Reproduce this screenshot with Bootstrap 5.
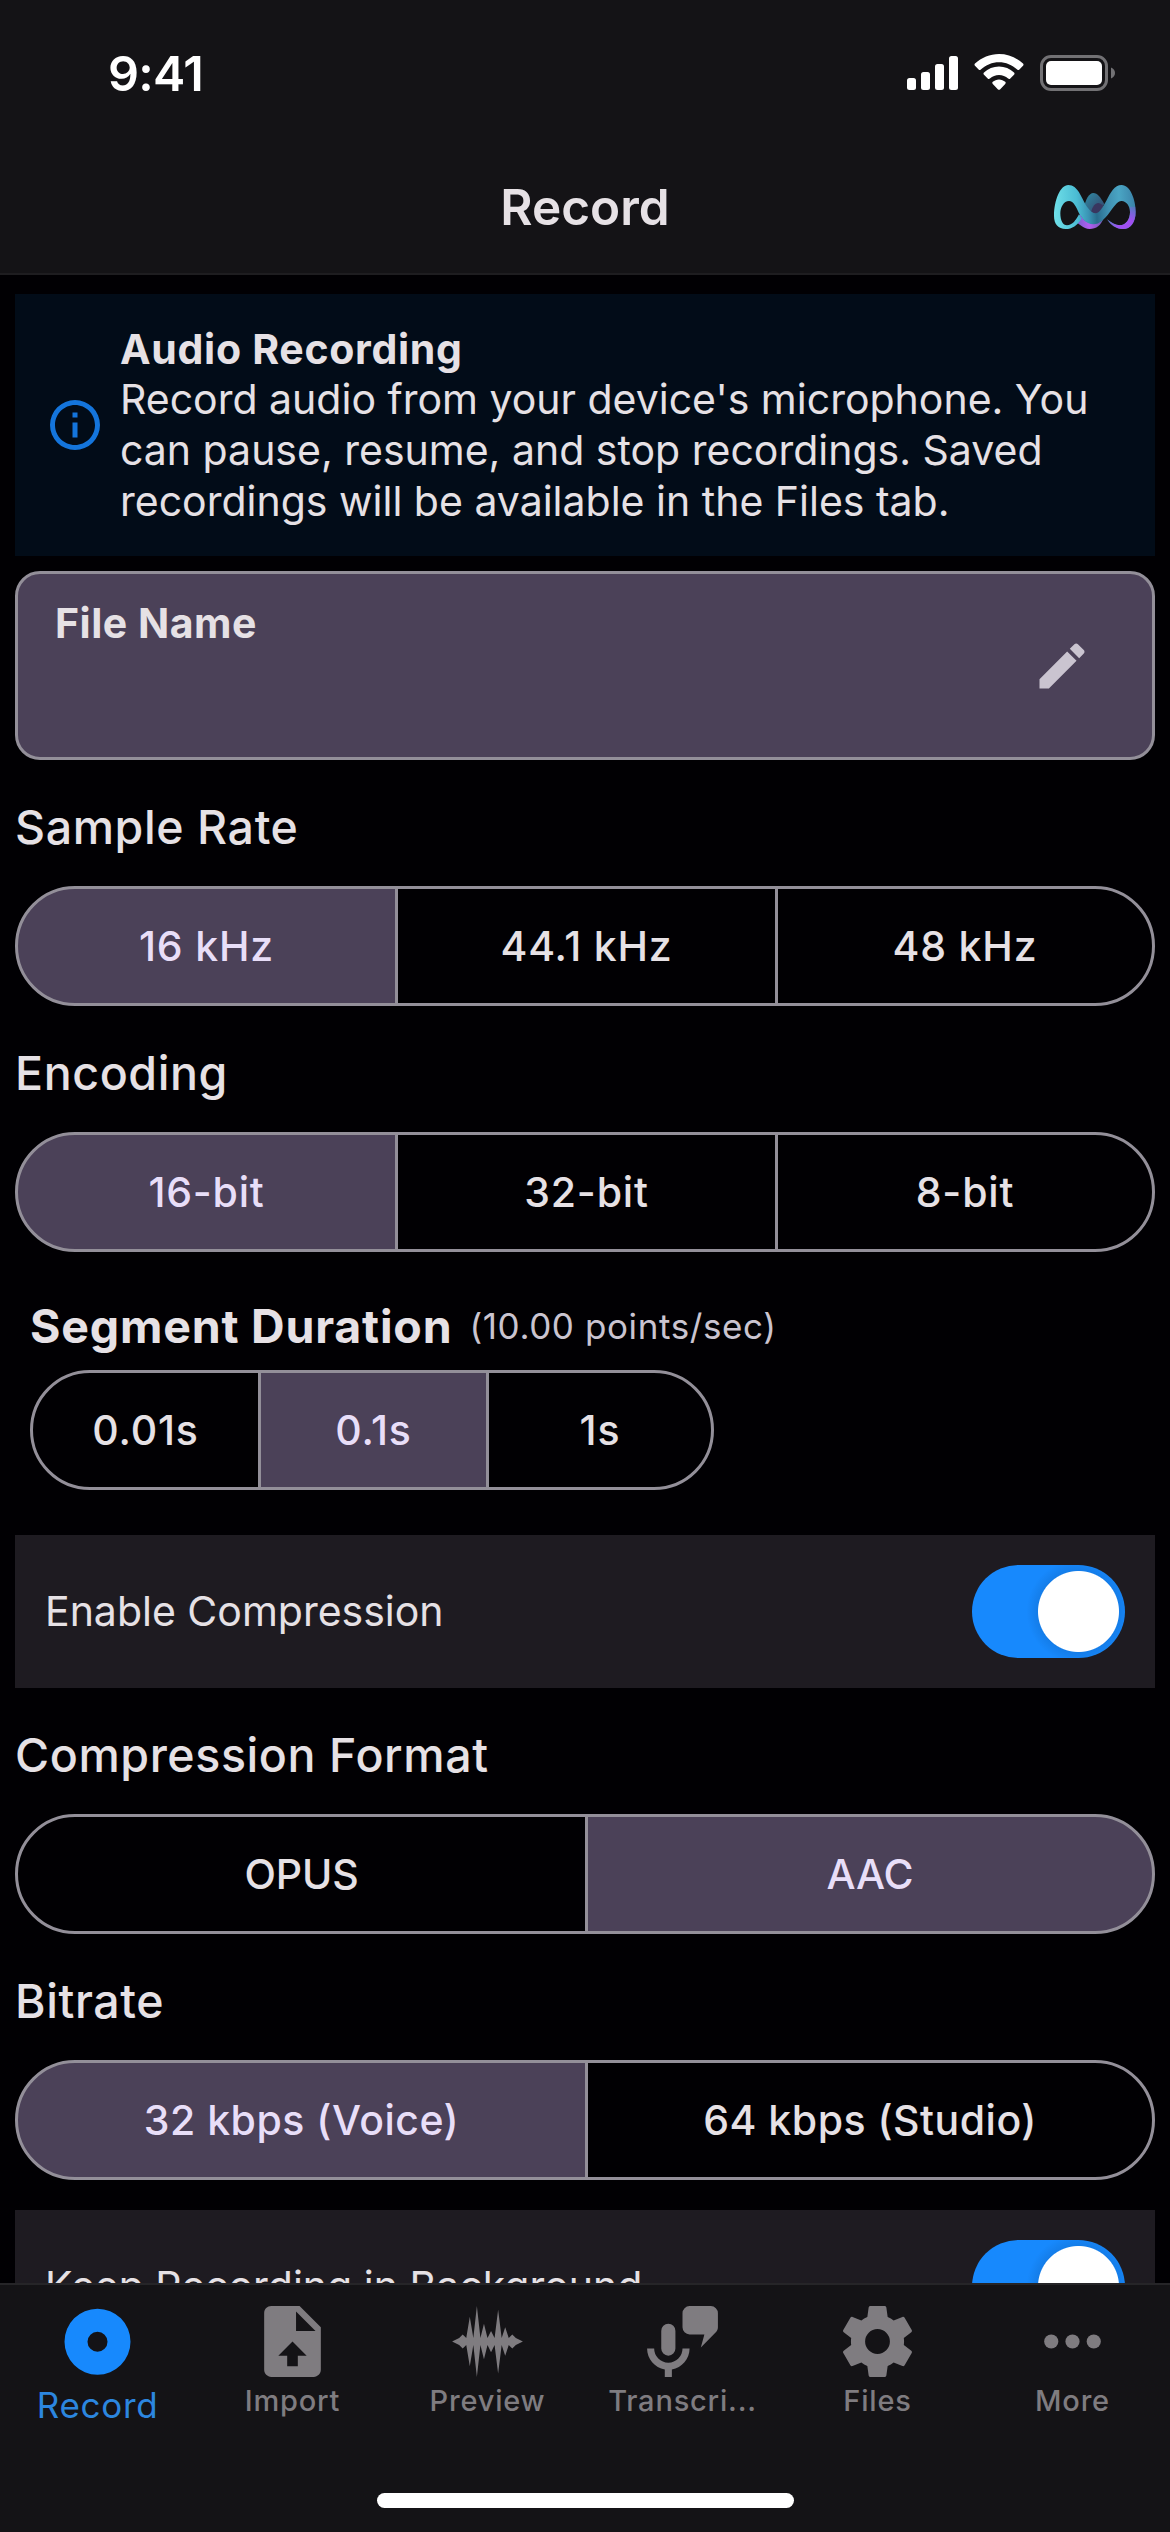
<!DOCTYPE html>
<html lang="en">
<head>
<meta charset="utf-8">
<meta name="viewport" content="width=device-width, initial-scale=1">
<title>Record</title>
<link href="https://cdn.jsdelivr.net/npm/bootstrap@5.3.0/dist/css/bootstrap.min.css" rel="stylesheet">
<script src="https://cdn.jsdelivr.net/npm/bootstrap@5.3.0/dist/js/bootstrap.bundle.min.js"></script>
<style>
  body { font-family: Inter, "Liberation Sans", sans-serif; font-size: 41px; line-height: 50.6px; color: #e6e1e5; background: #010003; height: 2532px; overflow: hidden; }
  svg { display: block; flex: none; }
  .app-header { background: #141316; border-bottom: 2px solid #1e1d20; height: 275px; }
  .status-row { height: 141px; padding: 5px 55px 0 108px; }
  .clock { font-size: 48.5px; font-weight: 600; letter-spacing: -.7px; color: #fff; padding-top: 2px; }
  .nav-row { height: 132px; padding: 0 33px; }
  .side-slot { width: 84px; }
  .screen-title { font-size: 49.5px; font-weight: 600; line-height: 60px; }
  .screen-body { padding: 0 15px; }
  .info-alert { margin-top: 19px; height: 262px; padding: 0 15px 0 30px; gap: 15px; background: #020c18; border: 0; border-radius: 0; color: inherit; }
  .strong-label { font-weight: 700; letter-spacing: .7px; }
  .name-card { margin-top: 15px; height: 189px; background: #4b4158; border: 3px solid #938f99; border-radius: 25px; padding: 24px 60px 0 37px; color: inherit; }
  .name-card .strong-label { letter-spacing: .5px; }
  .group-label { font-size: 46.5px; font-weight: 500; line-height: 60px; letter-spacing: .6px; margin: 37px 0 29px; }
  .segments { width: 100%; height: 120px; }
  .segments .btn { --n: 3; flex: 0 0 calc(100% / var(--n) + 3px); margin: 0 -3px 0 0 !important; padding: 2px 0 0; display: flex; align-items: center; justify-content: center; border: 3px solid #938f99; font-size: 41px; font-weight: 500; letter-spacing: .8px; color: #e6e1e5; background: transparent; }
  .segments.two .btn { --n: 2; letter-spacing: .5px; }
  .segments .btn:first-child { border-radius: 60px 0 0 60px; }
  .segments .btn:last-child { flex-basis: calc(100% / var(--n)); margin-right: 0 !important; border-radius: 0 60px 60px 0; }
  .segments .btn.active { background: #4b4158; color: #e8def8; border-color: #938f99; }
  .segments .btn.caps { letter-spacing: -.1px; }
  .duration { padding: 44px 15px 0; }
  .duration-title { font-size: 46.5px; font-weight: 700; line-height: 60px; letter-spacing: .8px; }
  .duration-note { font-size: 35px; letter-spacing: .6px; color: #cac4d0; margin-left: 17px; }
  .duration .segments { width: 684px; margin-top: 14px; }
  .switch-row { height: 153px; padding: 0 30px; margin-top: 30px; background: #1e1b21; }
  .duration + .switch-row { margin-top: 45px; }
  .switch-row .form-check-input { float: none; margin: 0; width: 153px; height: 93px; border: 0; border-radius: 47px; background-color: #1789fd; background-size: 100% 100%; background-position: 0 0; box-shadow: none;
    background-image: radial-gradient(circle at 106.5px 46.5px, #fff 40px, rgba(0,40,90,.12) 41px, rgba(0,40,90,0) 52px); }
  .tab-bar { height: 249px; background: #141316; border-top: 2px solid #262528; padding: 14px 0 0; align-items: flex-start; }
  .tab-bar .nav-link { width: 195px; padding: 0; color: #7f7c80; font-size: 29px; font-weight: 500; line-height: 40px; letter-spacing: .8px; }
  .tab-bar .nav-link span { margin-top: -3px; }
  .tab-bar .nav-link.active { color: #1789fd; font-size: 35px; font-weight: 400; letter-spacing: .7px; }
  .tab-bar .nav-link.active span { margin-top: 1px; color: #2c86df; }
  .home-indicator { left: 377px; top: 208px; width: 417px; height: 15px; background: #fff; border-radius: 8px; }
</style>
</head>
<body class="d-flex flex-column">

<header class="app-header flex-shrink-0">
  <div class="status-row d-flex align-items-center justify-content-between">
    <div class="clock">9:41</div>
    <svg width="208" height="38" viewBox="907 55 208 38">
      <g fill="#fff">
        <rect x="907" y="79" width="9" height="12" rx="2.5"/><rect x="921" y="73" width="9" height="18" rx="2.5"/>
        <rect x="935" y="65" width="9" height="26" rx="2.5"/><rect x="949" y="57" width="9" height="34" rx="2.5"/>
        <path d="M999 55c9 0 17.500 3.500 24 9.600.7.700.7 1.500 0 2.200l-3.600 3.700c-.7.700-1.500.7-2.200 0-5-4.700-11.400-7.300-18.200-7.300s-13.200 2.600-18.200 7.300c-.7.700-1.500.7-2.200 0l-3.600-3.700c-.7-.7-.7-1.500 0-2.200C981.500 58.500 990 55 999 55z"/>
        <path d="M999 67.600c5.700 0 11 2.200 15 6 .7.700.7 1.500 0 2.200l-3.700 3.700c-.7.700-1.500.7-2.200.1-2.500-2.300-5.700-3.500-9.100-3.500s-6.600 1.200-9.100 3.500c-.7.600-1.500.6-2.200-.1l-3.700-3.700c-.7-.7-.7-1.500 0-2.200 4-3.800 9.300-6 15-6z"/>
        <path d="M999 80.400c2.400 0 4.600.9 6.200 2.400.7.700.7 1.400 0 2.100l-5.200 5.500c-.6.600-1.400.6-2 0l-5.200-5.500c-.7-.7-.7-1.400 0-2.100 1.600-1.500 3.800-2.400 6.200-2.400z"/>
        <rect x="1046" y="62" width="56" height="24" rx="5"/>
      </g>
      <rect x="1041.500" y="57.500" width="65" height="33" rx="9.500" fill="none" stroke="#727174" stroke-width="3"/>
      <path d="M1111 68.500c2.600 1 4 3 4 5.500s-1.400 4.500-4 5.500z" fill="#727174"/>
    </svg>
  </div>
  <nav class="nav-row d-flex align-items-center justify-content-between">
    <div class="side-slot"></div>
    <h1 class="screen-title m-0">Record</h1>
    <svg width="84" height="46" viewBox="70 72 252 138">
      <defs>
        <linearGradient id="band" gradientUnits="userSpaceOnUse" x1="73" y1="140" x2="318" y2="130"><stop offset="0" stop-color="#6fdfe8"/><stop offset=".28" stop-color="#4bbdd4"/><stop offset=".42" stop-color="#3a93b4"/><stop offset=".52" stop-color="#286c8c"/><stop offset=".66" stop-color="#3f8fb0"/><stop offset=".8" stop-color="#4aa5c4"/><stop offset="1" stop-color="#3a82a8"/></linearGradient>
        <radialGradient id="glow" gradientUnits="userSpaceOnUse" cx="292" cy="208" r="82"><stop offset=".35" stop-color="#a04ff0"/><stop offset=".6" stop-color="#8a5ae6" stop-opacity=".8"/><stop offset="1" stop-color="#8a5ae6" stop-opacity="0"/></radialGradient>
        <linearGradient id="peak" x1="0" y1="0" x2="1" y2="1"><stop offset="0" stop-color="#2f8da6"/><stop offset="1" stop-color="#353a62"/></linearGradient>
        <linearGradient id="base" x1="0" y1="0" x2="1" y2="0"><stop offset="0" stop-color="#6b62c8"/><stop offset=".5" stop-color="#b45cf2"/><stop offset="1" stop-color="#6c5bb0"/></linearGradient>
      </defs>
      <path fill="url(#peak)" d="M162 145C168 118 178 99 191 99C204 99 212 112 224 132L200 168L172 165Z"/>
      <path fill="#39365f" d="M184 158C188 140 196 129 206 129C214 130 218 134 221 140L204 168Z"/>
      <path fill="url(#base)" d="M134 184C143 176 148 168 152 162C160 178 170 190 190 190C204 190 212 186 222 174C214 196 200 207 180 207C160 207 148 190 134 184Z"/>
      <path fill="url(#band)" d="M73 168C73 120 92 75 116 75C145 75 154 112 172 140C181 153 190 160 199 160C211 157 218 142 230 122C243 98 254 75 276 75C302 75 318 120 318 155C318 188 302 207 280 207C258 207 244 195 232 178C244 188 258 196 270 196C290 196 301 176 301 156C301 138 290 123 276 123C262 123 252 142 238 160C224 178 210 193 192 193C168 193 158 175 148 160C140 142 132 123 118 123C102 123 92 142 92 160C92 182 100 196 112 196C128 196 140 180 148 163L156 176C142 196 128 207 108 207C86 207 73 192 73 168Z"/>
      <path fill="url(#glow)" d="M318 140V155C318 188 302 207 280 207C258 207 244 195 232 178C244 188 258 196 270 196C290 196 301 176 301 156L300 140Z"/>
    </svg>
  </nav>
</header>

<main class="screen-body">
  <div class="alert info-alert d-flex align-items-center mb-0" role="alert">
    <svg width="60" height="60" viewBox="0 0 24 24" fill="#1475dc"><path d="M11 9h2V7h-2m1 13c-4.410 0-8-3.590-8-8s3.590-8 8-8 8 3.590 8 8-3.590 8-8 8m0-18A10 10 0 0 0 2 12a10 10 0 0 0 10 10 10 10 0 0 0 10-10A10 10 0 0 0 12 2m-1 15h2v-6h-2v6z"/></svg>
    <div>
      <div class="strong-label">Audio Recording</div>
      <div>Record audio from your device's microphone. You<br>can pause, resume, and stop recordings. Saved<br>recordings will be available in the Files tab.</div>
    </div>
  </div>

  <div class="card name-card flex-row justify-content-between">
    <div class="strong-label">File Name</div>
    <svg class="align-self-center mb-4" width="60" height="60" viewBox="0 0 24 24" fill="#cac4d0"><path d="M20.710 7.040c.39-.39.39-1.040 0-1.410l-2.340-2.340c-.37-.39-1.020-.39-1.410 0l-1.840 1.830 3.750 3.750M3 17.250V21h3.750L17.810 9.930l-3.750-3.750L3 17.250z"/></svg>
  </div>

  <h2 class="group-label">Sample Rate</h2>
  <div class="btn-group segments" role="group">
    <button class="btn active">16 kHz</button><button class="btn">44.1 kHz</button><button class="btn">48 kHz</button>
  </div>

  <h2 class="group-label">Encoding</h2>
  <div class="btn-group segments" role="group">
    <button class="btn active">16-bit</button><button class="btn">32-bit</button><button class="btn">8-bit</button>
  </div>

  <section class="duration">
    <div class="d-flex align-items-center"><span class="duration-title">Segment Duration</span><span class="duration-note">(10.00 points/sec)</span></div>
    <div class="btn-group segments" role="group">
      <button class="btn">0.01s</button><button class="btn active">0.1s</button><button class="btn">1s</button>
    </div>
  </section>

  <div class="switch-row form-switch d-flex align-items-center justify-content-between">
    <label for="sw1">Enable Compression</label>
    <input class="form-check-input" type="checkbox" role="switch" id="sw1" checked>
  </div>

  <h2 class="group-label">Compression Format</h2>
  <div class="btn-group segments two" role="group">
    <button class="btn caps">OPUS</button><button class="btn caps active">AAC</button>
  </div>

  <h2 class="group-label">Bitrate</h2>
  <div class="btn-group segments two" role="group">
    <button class="btn active">32 kbps (Voice)</button><button class="btn">64 kbps (Studio)</button>
  </div>

  <div class="switch-row form-switch d-flex align-items-center justify-content-between">
    <label for="sw2">Keep Recording in Background</label>
    <input class="form-check-input" type="checkbox" role="switch" id="sw2" checked>
  </div>
</main>

<nav class="tab-bar nav fixed-bottom flex-nowrap">
  <a class="nav-link active d-flex flex-column align-items-center" href="#">
    <svg width="85" height="85" viewBox="0 0 85 85" fill="currentColor"><path fill-rule="evenodd" d="M42.500 9.700a33 33 0 1 0 0 66 33 33 0 1 0 0-66zm0 23a10 10 0 1 1 0 20 10 10 0 1 1 0-20z"/></svg>
    <span>Record</span></a>
  <a class="nav-link d-flex flex-column align-items-center" href="#">
    <svg width="85" height="85" viewBox="0 0 24 24" fill="currentColor"><path d="M14,2H6C4.890,2 4,2.890 4,4V20C4,21.100 4.890,22 6,22H18C19.100,22 20,21.100 20,20V8L14,2M13.500,16V19H10.500V16H8L12,12L16,16H13.500M13,9V3.500L18.500,9H13Z"/></svg>
    <span>Import</span></a>
  <a class="nav-link d-flex flex-column align-items-center" href="#">
    <svg width="85" height="85" viewBox="0 0 24 24" fill="currentColor"><path d="M22 12L20 13L19 14L18 13L17 16L16 13L15 21L14 13L13 15L12 13L11 17L10 13L9 22L8 13L7 19L6 13L5 14L4 13L2 12L4 11L5 10L6 11L7 5L8 11L9 2L10 11L11 7L12 11L13 9L14 11L15 3L16 11L17 8L18 11L19 10L20 11L22 12Z"/></svg>
    <span>Preview</span></a>
  <a class="nav-link d-flex flex-column align-items-center" href="#">
    <svg width="85" height="85" viewBox="0 0 24 24" fill="currentColor"><path d="M8,7A2,2 0 0,1 10,9V14A2,2 0 0,1 8,16A2,2 0 0,1 6,14V9A2,2 0 0,1 8,7M14,14C14,16.970 11.840,19.440 9,19.920V22H7V19.920C4.160,19.440 2,16.970 2,14H4A4,4 0 0,0 8,18A4,4 0 0,0 12,14H14M21.410,9.410L17.170,13.660L18.180,10H14A2,2 0 0,1 12,8V4A2,2 0 0,1 14,2H20A2,2 0 0,1 22,4V8C22,8.550 21.780,9.050 21.410,9.410Z"/></svg>
    <span>Transcri...</span></a>
  <a class="nav-link d-flex flex-column align-items-center" href="#">
    <svg width="85" height="85" viewBox="0 0 24 24" fill="currentColor"><path d="M12,15.500A3.500,3.500 0 0,1 8.500,12A3.500,3.500 0 0,1 12,8.500A3.500,3.500 0 0,1 15.500,12A3.500,3.500 0 0,1 12,15.500M19.430,12.970C19.470,12.650 19.500,12.330 19.500,12C19.500,11.670 19.470,11.340 19.430,11L21.540,9.370C21.730,9.220 21.780,8.950 21.660,8.730L19.660,5.270C19.540,5.050 19.270,4.960 19.050,5.050L16.560,6.050C16.040,5.660 15.500,5.320 14.870,5.070L14.500,2.420C14.460,2.180 14.250,2 14,2H10C9.750,2 9.540,2.180 9.500,2.420L9.130,5.070C8.500,5.320 7.960,5.660 7.440,6.050L4.950,5.050C4.730,4.960 4.460,5.050 4.340,5.270L2.340,8.730C2.210,8.950 2.270,9.220 2.460,9.370L4.570,11C4.530,11.340 4.500,11.670 4.500,12C4.500,12.330 4.530,12.650 4.570,12.970L2.460,14.630C2.270,14.780 2.210,15.050 2.340,15.270L4.340,18.730C4.460,18.950 4.730,19.030 4.950,18.950L7.440,17.940C7.960,18.340 8.500,18.680 9.130,18.930L9.500,21.580C9.540,21.820 9.750,22 10,22H14C14.250,22 14.460,21.820 14.500,21.580L14.870,18.930C15.500,18.670 16.040,18.340 16.560,17.940L19.050,18.950C19.270,19.030 19.540,18.950 19.660,18.730L21.660,15.270C21.780,15.050 21.730,14.780 21.540,14.630L19.430,12.970Z"/></svg>
    <span>Files</span></a>
  <a class="nav-link d-flex flex-column align-items-center" href="#">
    <svg width="85" height="85" viewBox="0 0 24 24" fill="currentColor"><circle cx="6" cy="12" r="2"/><circle cx="12" cy="12" r="2"/><circle cx="18" cy="12" r="2"/></svg>
    <span>More</span></a>
  <div class="home-indicator position-absolute"></div>
</nav>
</body>
</html>
